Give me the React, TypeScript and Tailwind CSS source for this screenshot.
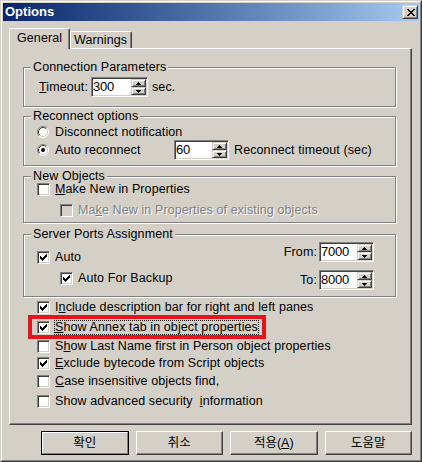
import React from "react";

const sunken =
  "border border-t-[#808080] border-l-[#808080] border-r-white border-b-white shadow-[inset_1px_1px_0_#404040,inset_-1px_-1px_0_#d4d0c8]";
const smallRaised =
  "border border-t-[#d4d0c8] border-l-[#d4d0c8] border-r-[#404040] border-b-[#404040] shadow-[inset_1px_1px_0_white,inset_-1px_-1px_0_#808080] bg-[#d4d0c8]";
const disabledText = "text-[#808080] [text-shadow:1px_1px_0_white]";

function CheckMark() {
  return (
    <svg width="7" height="7" viewBox="0 0 7 7" shapeRendering="crispEdges">
      <rect x="0" y="2" width="1" height="3" fill="black" />
      <rect x="1" y="3" width="1" height="3" fill="black" />
      <rect x="2" y="4" width="1" height="3" fill="black" />
      <rect x="3" y="3" width="1" height="3" fill="black" />
      <rect x="4" y="2" width="1" height="3" fill="black" />
      <rect x="5" y="1" width="1" height="3" fill="black" />
      <rect x="6" y="0" width="1" height="3" fill="black" />
    </svg>
  );
}

function Checkbox({ checked = false, disabled = false }: { checked?: boolean; disabled?: boolean }) {
  return (
    <span
      className={`${sunken} flex w-[13px] h-[13px] shrink-0 items-center justify-center ${
        disabled ? "bg-[#d4d0c8]" : "bg-white"
      }`}
    >
      {checked && <CheckMark />}
    </span>
  );
}

function Radio({ checked = false }: { checked?: boolean }) {
  return (
    <svg width="12" height="12" viewBox="0 0 12 12" className="shrink-0">
      <circle cx="6" cy="6" r="5" fill="white" />
      <path d="M2.11 9.89 A5.5 5.5 0 0 1 9.89 2.11" stroke="#808080" fill="none" />
      <path d="M9.89 2.11 A5.5 5.5 0 0 1 2.11 9.89" stroke="#ffffff" fill="none" />
      <path d="M2.82 9.18 A4.5 4.5 0 0 1 9.18 2.82" stroke="#404040" fill="none" />
      <path d="M9.18 2.82 A4.5 4.5 0 0 1 2.82 9.18" stroke="#d4d0c8" fill="none" />
      {checked && <circle cx="6" cy="6" r="2" fill="black" />}
    </svg>
  );
}

function Arrow({ up }: { up?: boolean }) {
  return (
    <svg width="5" height="3" viewBox="0 0 5 3" shapeRendering="crispEdges">
      {up ? (
        <>
          <rect x="2" y="0" width="1" height="1" fill="black" />
          <rect x="1" y="1" width="3" height="1" fill="black" />
          <rect x="0" y="2" width="5" height="1" fill="black" />
        </>
      ) : (
        <>
          <rect x="0" y="0" width="5" height="1" fill="black" />
          <rect x="1" y="1" width="3" height="1" fill="black" />
          <rect x="2" y="2" width="1" height="1" fill="black" />
        </>
      )}
    </svg>
  );
}

function Spin({ value, w }: { value: string; w: string }) {
  return (
    <div className={`${sunken} ${w} flex h-[20px] shrink-0 bg-white`}>
      <span className="flex-1 pl-[1px] pt-[1px] leading-[16px] text-[13px] tracking-[-0.2px]">{value}</span>
      <div className="flex flex-col py-[1px] pr-[1px]">
        <div className={`${smallRaised} flex w-[15px] h-[8px] items-center justify-center`}>
          <Arrow up />
        </div>
        <div className={`${smallRaised} flex w-[15px] h-[8px] items-center justify-center`}>
          <Arrow />
        </div>
      </div>
    </div>
  );
}

function Group({
  title,
  className,
  children,
}: {
  title: string;
  className: string;
  children?: React.ReactNode;
}) {
  return (
    <div className={`border border-[#808080] shadow-[1px_1px_0_white,inset_1px_1px_0_white] ${className}`}>
      <div className="-mt-[7px] ml-[7px] px-[2px] w-fit bg-[#d4d0c8] leading-[12px] whitespace-pre">{title}</div>
      {children}
    </div>
  );
}

function CbRow({
  checked,
  disabled,
  className,
  children,
}: {
  checked?: boolean;
  disabled?: boolean;
  className: string;
  children: React.ReactNode;
}) {
  return (
    <div className={`flex items-center h-[14px] ${className}`}>
      <Checkbox checked={checked} disabled={disabled} />
      <span className={`ml-[5px] leading-[14px] whitespace-pre ${disabled ? disabledText : ""}`}>{children}</span>
    </div>
  );
}

function Button({ children, def }: { children: React.ReactNode; def?: boolean }) {
  if (def) {
    return (
      <div className="w-[88px] h-[24px] border border-black">
        <div className="w-full h-full flex items-center justify-center border border-t-white border-l-white border-r-[#808080] border-b-[#808080]">
          {children}
        </div>
      </div>
    );
  }
  return (
    <div className="w-[88px] h-[24px] flex items-center justify-center border border-t-white border-l-white border-r-[#404040] border-b-[#404040] shadow-[inset_-1px_-1px_0_#808080]">
      {children}
    </div>
  );
}

function CloseGlyph() {
  const px: [number, number][] = [
    [0, 0], [1, 0], [6, 0], [7, 0],
    [1, 1], [2, 1], [5, 1], [6, 1],
    [2, 2], [3, 2], [4, 2], [5, 2],
    [3, 3], [4, 3],
    [2, 4], [3, 4], [4, 4], [5, 4],
    [1, 5], [2, 5], [5, 5], [6, 5],
    [0, 6], [1, 6], [6, 6], [7, 6],
  ];
  return (
    <svg width="8" height="7" viewBox="0 0 8 7" shapeRendering="crispEdges">
      {px.map(([x, y], i) => (
        <rect key={i} x={x} y={y} width="1" height="1" fill="black" />
      ))}
    </svg>
  );
}

export default function App() {
  return (
    <div className="w-[422px] h-[462px] bg-[#d4d0c8] text-black text-[12.5px] tracking-[0.1px] font-['Liberation_Sans','Noto_Sans_CJK_KR',sans-serif] border border-t-[#d4d0c8] border-l-[#d4d0c8] border-r-[#404040] border-b-[#404040]">
      <div className="w-full h-full p-[1px] border border-t-white border-l-white border-r-[#808080] border-b-[#808080]">
        {/* title bar */}
        <div className="flex items-center justify-between h-[18px] pl-[2px] pr-[1px] bg-linear-to-r from-[#0a246a] to-[#a6caf0]">
          <span className="text-white font-bold text-[13px] tracking-normal leading-[16px]">Options</span>
          <div className={`${smallRaised} flex w-[16px] h-[14px] items-center justify-center pl-[1px] pt-[1px]`}>
            <CloseGlyph />
          </div>
        </div>

        <div className="pl-[6px] pr-[7px]">
          {/* tabs */}
          <div className="mt-[7px] flex items-end h-[20px]">
            <div className="relative z-10 -mb-[1px] w-[61px] h-[21px] pl-[7px] pt-[2px] leading-[14px] bg-[#d4d0c8] rounded-t-[2px] border-l border-t border-r border-l-white border-t-white border-r-[#404040] shadow-[inset_-1px_0_0_#808080]">
              General
            </div>
            <div className="w-[62px] h-[17px] pl-[3px] pt-[1px] leading-[14px] rounded-t-[2px] border-l border-t border-r border-l-white border-t-white border-r-[#404040] shadow-[inset_-1px_0_0_#808080]">
              Warnings
            </div>
          </div>

          {/* panel */}
          <div className="h-[377px] pt-[18px] pl-[13px] pr-[15px] border border-t-white border-l-white border-r-[#404040] border-b-[#404040] shadow-[inset_-1px_-1px_0_#808080]">
            <Group title="Connection Parameters" className="h-[40px]">
              <div className="flex items-center mt-[4px] h-[20px] pl-[15px]">
                <span className="w-[52px]">
                  <u>T</u>imeout:
                </span>
                <Spin value="300" w="w-[57px]" />
                <span className="ml-[4px]">sec.</span>
              </div>
            </Group>

            <Group title="Reconnect options" className="mt-[9px] h-[50px]">
              <div className="flex items-center mt-[3px] h-[14px] pl-[13px]">
                <Radio />
                <span className="ml-[6px] leading-[14px]">Disconnect notification</span>
              </div>
              <div className="flex items-center mt-[1px] h-[20px] pl-[13px]">
                <Radio checked />
                <span className="ml-[6px] w-[119px] leading-[14px]">Auto reconnect</span>
                <Spin value="60" w="w-[55px]" />
                <span className="ml-[5px]">Reconnect timeout (sec)</span>
              </div>
            </Group>

            <Group title="New Objects" className="mt-[10px] h-[47px]">
              <CbRow className="mt-[0px] ml-[13px]">
                <u>M</u>ake New in Properties
              </CbRow>
              <CbRow className="mt-[7px] ml-[36px]" disabled>
                Ma<u>k</u>e New in Properties of existing objects
              </CbRow>
            </Group>

            <Group title="Server Ports Assignment" className="mt-[11px] h-[63px]">
              <div className="flex justify-between pr-[21px]">
                <div>
                  <CbRow className="mt-[10px] ml-[13px]" checked>
                    Auto
                  </CbRow>
                  <CbRow className="mt-[7px] ml-[36px]" checked>
                    Auto For Backup
                  </CbRow>
                </div>
                <div className="flex flex-col items-end">
                  <div className="flex items-center mt-[2px] h-[20px]">
                    <span className="mr-[2px]">From:</span>
                    <Spin value="7000" w="w-[55px]" />
                  </div>
                  <div className="flex items-center mt-[8px] h-[20px]">
                    <span className="mr-[2px]">To:</span>
                    <Spin value="8000" w="w-[55px]" />
                  </div>
                </div>
              </div>
            </Group>

            <CbRow className="mt-[3px] ml-[14px]" checked>
              I<u>n</u>clude description bar for right and left panes
            </CbRow>
            <div className="relative mt-[6px] ml-[14px] flex items-center h-[14px]">
              <Checkbox checked />
              <span className="ml-[5px] leading-[13px] whitespace-pre outline-1 outline-dotted outline-black">
                <u>S</u>how Annex tab in object properties
              </span>
              <div className="absolute left-[-9px] top-[-5px] w-[238px] h-[24px] border-[4px] border-[#e8141c]" />
            </div>
            <CbRow className="mt-[5px] ml-[14px]">
              S<u>h</u>ow Last Name first in Person object properties
            </CbRow>
            <CbRow className="mt-[3px] ml-[14px]" checked>
              <u>E</u>xclude bytecode from Script objects
            </CbRow>
            <CbRow className="mt-[4px] ml-[14px]">
              <u>C</u>ase insensitive objects find,
            </CbRow>
            <CbRow className="mt-[6px] ml-[14px]">
              {"Show advanced security  "}
              <u>i</u>nformation
            </CbRow>
          </div>

          {/* buttons */}
          <div className="mt-[6px] ml-[32px] flex gap-[7px] tracking-normal">
            <Button def>확인</Button>
            <Button>취소</Button>
            <Button>
              적용(<u>A</u>)
            </Button>
            <Button>도움말</Button>
          </div>
        </div>
      </div>
    </div>
  );
}
